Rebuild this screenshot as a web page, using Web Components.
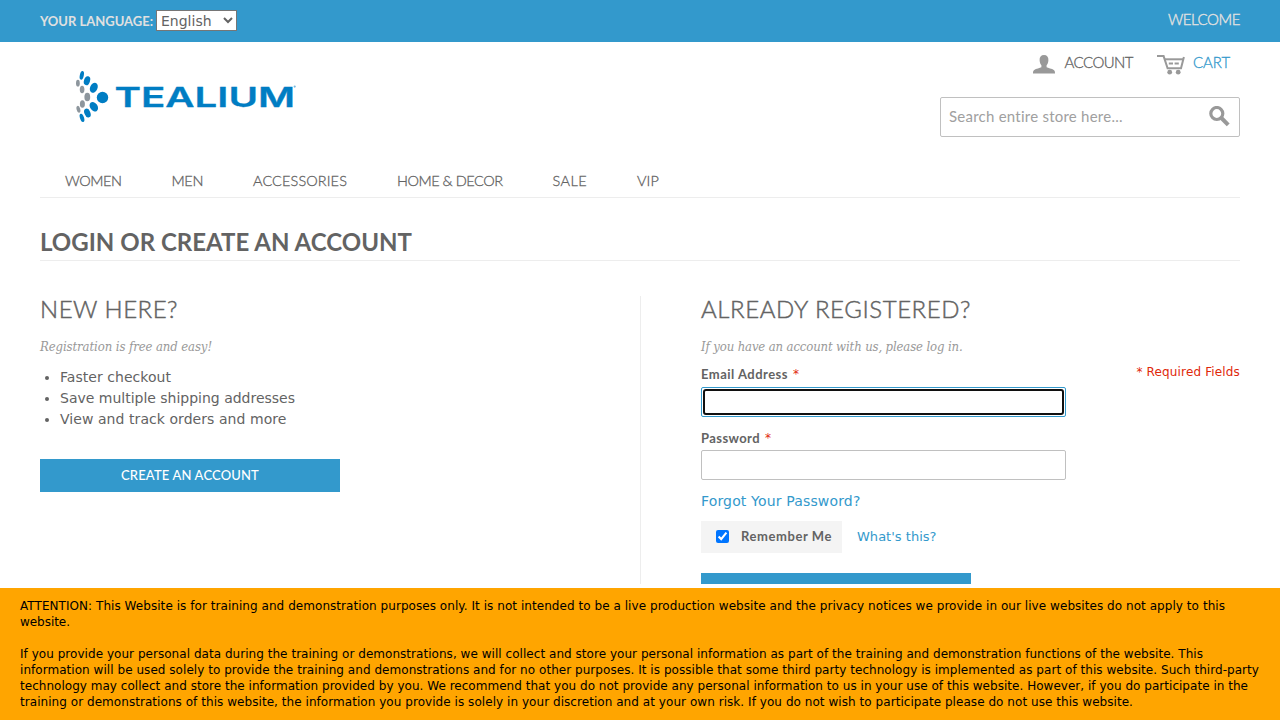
<!DOCTYPE html>
<html lang="en">
<head>
<meta charset="utf-8">
<title>Customer Login</title>
<style>
html,body{margin:0;height:100%;overflow:hidden;background:#fff}
body{font-family:"DejaVu Sans",sans-serif;color:#636363}
</style>
</head>
<body>
<store-page></store-page>
<script>
const define = (name, html, setup) => {
  const tpl = document.createElement('template');
  tpl.innerHTML = html;
  customElements.define(name, class extends HTMLElement {
    constructor() {
      super();
      this.attachShadow({ mode: 'open' }).append(tpl.content.cloneNode(true));
    }
    connectedCallback() { if (setup) setup(this, this.shadowRoot); }
  });
};

/* One line of text tracked to an exact measure given in the w attribute. */
define('fit-text', `
<style>
:host{display:block;white-space:nowrap;font-kerning:normal}
span{display:inline-block}
</style><span><slot></slot></span>`, (el, root) => {
  const w = +el.getAttribute('w');
  el.style.width = w + 'px';
  const span = root.querySelector('span');
  const n = el.textContent.length;
  const natural = span.getBoundingClientRect().width;
  el.style.letterSpacing = ((w - natural) / n) + 'px';
});

define('top-bar', `
<style>
:host{display:flex;justify-content:space-between;height:42px;padding:0 40px;background:#3399cc;color:#e0e0e0;font-family:Lato,sans-serif;box-sizing:border-box}
.lang{display:flex;gap:3px;align-items:flex-start}
.label{font-weight:700;font-size:13px;line-height:42px}
select{margin:10px 0 0;width:81px;height:21px;padding:0;font:14px "DejaVu Sans",sans-serif;color:#636363;background:#fff;border:1px solid #767676;border-radius:0}
.hi{font-size:15px;line-height:38px;font-weight:300;-webkit-text-stroke:.4px currentColor}
</style>
<div class="lang"><fit-text class="label" w="113">YOUR LANGUAGE:</fit-text><select><option>English</option></select></div>
<fit-text class="hi" w="72">WELCOME</fit-text>`);

define('brand-logo', `
<style>:host{display:block;width:224px;height:56px}svg{display:block}</style>
<svg width="224" height="56" viewBox="74 69 224 56">
<g fill="#007dc3">
<ellipse cx="81.8" cy="75.3" rx="2" ry="4.4" transform="rotate(12 81.8 75.3)"/>
<ellipse cx="87" cy="80.7" rx="3" ry="4.6" transform="rotate(18 87 80.7)"/>
<ellipse cx="93.8" cy="87.7" rx="3.7" ry="5.2" transform="rotate(25 93.8 87.7)"/>
<ellipse cx="102.5" cy="97.5" rx="5.7" ry="5.7"/>
<ellipse cx="93.8" cy="106.7" rx="3.7" ry="5.2" transform="rotate(-35 93.8 106.7)"/>
<ellipse cx="87.4" cy="113" rx="3" ry="4.6" transform="rotate(-22 87.4 113)"/>
<ellipse cx="82" cy="117.9" rx="2" ry="4.3" transform="rotate(-18 82 117.9)"/>
</g>
<g fill="#8d969d">
<ellipse cx="77.9" cy="83.2" rx="1.9" ry="3.4"/>
<ellipse cx="82.1" cy="89.5" rx="2.3" ry="3.8"/>
<ellipse cx="87.3" cy="97" rx="2.9" ry="4.3"/>
<ellipse cx="82.4" cy="104" rx="2.5" ry="3.8"/>
<ellipse cx="78.4" cy="109.3" rx="1.8" ry="3.5" transform="rotate(-15 78.4 109.3)"/>
</g>
<text x="114.5" y="107" font-family="Inter,sans-serif" font-weight="600" font-size="27.4" fill="#007dc3" stroke="#007dc3" stroke-width=".3" textLength="180.5" lengthAdjust="spacingAndGlyphs">TEALIUM</text>
<circle cx="294.7" cy="86.6" r="1.1" fill="#7db9df"/>
</svg>`);

define('header-tools', `
<style>
:host{display:flex;flex-direction:column;align-items:flex-end;width:300px}
.links{display:flex;height:42px;padding:13px 10px 0 0;box-sizing:border-box;font:300 15px/15px Lato,sans-serif;-webkit-text-stroke:.3px currentColor}
svg{display:block}
.person{margin-right:10px}.cart{margin:0 8px 0 24px}
.cartlabel{color:#3399cc}
.search{display:flex;justify-content:space-between;align-items:flex-start;margin-top:13px;width:300px;height:40px;padding:0 9px 0 8px;box-sizing:border-box;border:1px solid silver;border-radius:2px}
.ph{font:15px/37px Lato,sans-serif;color:#a0a0a0}
.glass{margin-top:8px}
</style>
<div class="links">
<svg class="person" width="22" height="20" viewBox="0 0 22 20"><path fill="#999" d="M11 0C14 0 15.6 2 15.4 5.2 15.3 8 14.3 9.2 13.6 10.3V12.3C15 13.2 19 13.7 20.8 15 22 16 22 17 22 18.6H0C0 17 0 16 1.2 15 3 13.7 7 13.2 8.4 12.3V10.3C7.7 9.2 6.7 8 6.6 5.2 6.4 2 8 0 11 0Z"/></svg>
<fit-text w="68.5">ACCOUNT</fit-text>
<svg class="cart" width="28" height="20" viewBox="0 0 28 20"><g fill="none" stroke="#999" stroke-width="2"><path d="M0 1.1H6.6L10.6 13.3H24L26.9 2" /><path d="M7.4 4.3H26"/><path stroke-width="2.2" d="M11.8 8.5H16M17.6 8.5H21.8"/></g><g fill="#999"><circle cx="12.7" cy="17.2" r="2.4"/><circle cx="21.2" cy="17.2" r="2.4"/></g></svg>
<fit-text class="cartlabel" w="37">CART</fit-text>
</div>
<div class="search"><fit-text class="ph" w="174">Search entire store here...</fit-text>
<svg class="glass" width="21" height="21" viewBox="0 0 21 21" fill="none" stroke="#999"><circle cx="7.8" cy="7.5" r="6" stroke-width="3.2"/><path d="M12.4 12L19.2 18.8" stroke-width="4"/></svg></div>`);

define('site-nav', `
<style>
:host{display:flex;gap:50px;height:33px;margin:0 40px;padding-left:25px;border-bottom:1px solid #ededed;font:300 14.5px/32px Lato,sans-serif;-webkit-text-stroke:.3px currentColor;box-sizing:border-box}
</style>
<fit-text w="56.5">WOMEN</fit-text><fit-text w="31.5">MEN</fit-text><fit-text w="94">ACCESSORIES</fit-text><fit-text w="105.5">HOME &amp; DECOR</fit-text><fit-text w="34.5">SALE</fit-text><fit-text w="22">VIP</fit-text>`);

define('blue-button', `
<style>
:host{display:flex;justify-content:center;height:33px;background:#3399cc;color:#fff;font:500 13px/33px Lato,sans-serif}
</style><slot></slot>`);

define('text-field', `
<style>
:host{display:block}
.label{display:flex;gap:5px;height:20px;font:700 13px/17px Lato,sans-serif}
.star{font:12px/17px "DejaVu Sans",sans-serif;color:#df280a}
:host([focused]) .label{line-height:15px}
:host([focused]) .star{line-height:15px}
.box{width:365px;height:30px;padding:1px;box-sizing:border-box;border:1px solid silver;border-radius:2px;background:#fff}
:host([focused]) .box{border-color:#3399cc}
:host([focused]) .ring{height:26px;box-sizing:border-box;border:2px solid #101010;border-radius:3px}
</style>
<div class="label"><slot></slot><span class="star">*</span></div>
<div class="box"><div class="ring"></div></div>`);

define('new-customer', `
<style>
:host{display:block;width:600px;height:288px;border-right:1px solid #ededed}
h2{margin:0;font:300 24px/26px Lato,sans-serif;-webkit-text-stroke:.45px currentColor}
.sub{margin-top:14px;height:20px;font:italic 13px/22px "DejaVu Serif Condensed","DejaVu Serif",serif;font-stretch:condensed;color:#999}
ul{margin:11px 0 0;padding-left:20px;font-size:14px;line-height:21px}
blue-button{width:300px;margin-top:29px}
</style>
<h2><fit-text w="138">NEW HERE?</fit-text></h2>
<fit-text class="sub" w="172">Registration is free and easy!</fit-text>
<ul><li><fit-text w="111">Faster checkout</fit-text></li><li><fit-text w="235">Save multiple shipping addresses</fit-text></li><li><fit-text w="226.5">View and track orders and more</fit-text></li></ul>
<blue-button><fit-text w="138">CREATE AN ACCOUNT</fit-text></blue-button>`);

define('login-form', `
<style>
:host{display:block;flex:1;height:288px;padding-left:60px}
h2{margin:0;font:300 24px/26px Lato,sans-serif;-webkit-text-stroke:.45px currentColor}
.sub{margin-top:14px;height:20px;font:italic 13px/22px "DejaVu Serif Condensed","DejaVu Serif",serif;font-stretch:condensed;color:#999}
.row{display:flex;justify-content:space-between}
.email{margin-top:11px}
.req{margin-top:7px;height:16px;font-size:12px;line-height:18px;color:#df280a}
.pw{margin-top:13px}
a{color:#3399cc}
.forgot{display:block;margin-top:11px;font-size:14px;line-height:20px}
.remember{display:flex;align-items:center;margin-top:10px}
.chip{display:flex;align-items:center;width:141px;height:32px;padding-left:15px;box-sizing:border-box;background:#f4f4f4;font:700 13px/30px Lato,sans-serif}
.chip fit-text{height:32px}
input{margin:-1px 12px 0 0;width:13px;height:13px}
.what{margin-left:15px;height:32px;font-size:13px;line-height:31px}
blue-button{width:270px;height:11px;margin-top:20px}
</style>
<h2><fit-text w="270">ALREADY REGISTERED?</fit-text></h2>
<fit-text class="sub" w="261.5">If you have an account with us, please log in.</fit-text>
<div class="row"><text-field class="email" focused><fit-text w="87">Email Address</fit-text></text-field><fit-text class="req" w="103.5">* Required Fields</fit-text></div>
<text-field class="pw"><fit-text w="59">Password</fit-text></text-field>
<a class="forgot"><fit-text w="159.5">Forgot Your Password?</fit-text></a>
<div class="remember"><label class="chip"><input type="checkbox" checked><fit-text w="91">Remember Me</fit-text></label><a class="what"><fit-text w="79.5">What's this?</fit-text></a></div>
<blue-button></blue-button>`);

define('notice-banner', `
<style>
:host{display:block;height:132px;padding:10px 20px;box-sizing:border-box;background:#ffa500;color:#000;font-size:12px;line-height:16px}
p{margin:0 0 16px}
p:last-child{margin:0}
</style>
<p><fit-text w="1205">ATTENTION: This Website is for training and demonstration purposes only. It is not intended to be a live production website and the privacy notices we provide in our live websites do not apply to this</fit-text>
<fit-text w="50">website.</fit-text></p>
<p><fit-text w="1183">If you provide your personal data during the training or demonstrations, we will collect and store your personal information as part of the training and demonstration functions of the website. This</fit-text>
<fit-text w="1239">information will be used solely to provide the training and demonstrations and for no other purposes. It is possible that some third party technology is implemented as part of this website. Such third-party</fit-text>
<fit-text w="1228">technology may collect and store the information provided by you. We recommend that you do not provide any personal information to us in your use of this website. However, if you do participate in the</fit-text>
<fit-text w="1113">training or demonstrations of this website, the information you provide is solely in your discretion and at your own risk. If you do not wish to participate please do not use this website.</fit-text></p>`);

define('store-page', `
<style>
:host{display:flex;flex-direction:column;height:720px;width:1280px;overflow:hidden}
header{display:flex;justify-content:space-between;height:123px;padding:0 40px 0 74px}
brand-logo{margin-top:27px}
h1{margin:28px 40px 0;height:35px;box-sizing:border-box;border-bottom:1px solid #ededed;font:700 24px/31px Lato,sans-serif}
main{display:flex;height:288px;margin:35px 40px 4px}
</style>
<top-bar></top-bar>
<header><brand-logo></brand-logo><header-tools></header-tools></header>
<site-nav></site-nav>
<h1><fit-text w="372">LOGIN OR CREATE AN ACCOUNT</fit-text></h1>
<main><new-customer></new-customer><login-form></login-form></main>
<notice-banner></notice-banner>`);
</script>
</body>
</html>
